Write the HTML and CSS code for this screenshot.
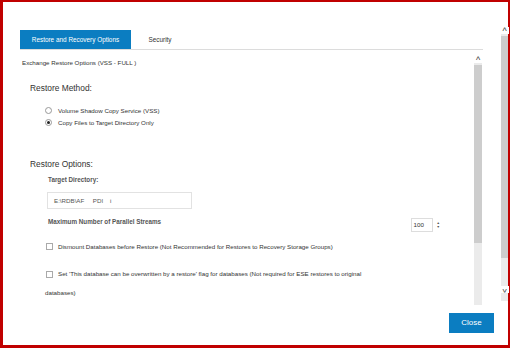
FILE: index.html
```html
<!doctype html>
<html lang="en">
<head>
<meta charset="UTF-8">
<title>Restore and Recovery Options</title>
<link rel="stylesheet" href="styles.css">
</head>
<body>
	<div class="frame">
		<div class="dialog">
			<div class="tabs">
				<div class="tab active">Restore and Recovery Options</div>
				<div class="tab second">Security</div>
			</div>
			<div class="panel">
				<div class="content">
					<div class="title">Exchange Restore Options (VSS - FULL )</div>

					<div class="section">Restore Method:</div>
					<div class="radios">
						<div class="radio"><span class="dot"></span>Volume Shadow Copy Service (VSS)</div>
						<div class="radio"><span class="dot on"></span>Copy Files to Target Directory Only</div>
					</div>

					<div class="section options">Restore Options:</div>
					<div class="field">
						<div class="label">Target Directory:</div>
						<div class="input">E:\RDB\AF&nbsp;&nbsp;&nbsp;&nbsp;&nbsp;PDI&nbsp;&nbsp;&nbsp;&nbsp;i</div>
						<div class="streams">
							<span class="label">Maximum Number of Parallel Streams</span>
							<span class="spin">
								<span class="spinbox">100</span>
								<span class="arrows"><i>&#9650;</i><i>&#9660;</i></span>
							</span>
						</div>
					</div>
					<div class="check"><span class="box"></span>Dismount Databases before Restore (Not Recommended for Restores to Recovery Storage Groups)</div>
					<div class="check wrap"><span class="box"></span>Set 'This database can be overwritten by a restore' flag for databases (Not required for ESE restores to original databases)</div>
				</div>
				<div class="scroll inner">
					<span class="arrow">&#94;</span>
					<span class="thumb"></span>
				</div>
			</div>
			<div class="footer">
				<a href="#" class="btn">Close</a>
			</div>
		</div>
		<div class="scroll outer">
			<span class="arrow">&#94;</span>
			<span class="thumb"></span>
			<span class="arrow down">&#94;</span>
		</div>
	</div>
</body>
</html>
```

FILE: styles.css
```css
* {margin:0;padding:0;box-sizing:border-box;}
body{font-family:"Liberation Sans",Arial,sans-serif;color:#333;background:#fff;}
a{text-decoration:none;}
.frame{width:510px;height:348px;border:solid #c00000;border-width:2px 2px 3px 3px;display:flex;background:#fff;}
.dialog{flex:1;padding:28px 7px 0 17px;display:flex;flex-direction:column;}
.tabs{display:flex;height:20px;border-bottom:1px solid #dcdcdc;margin-right:11px;font-size:6.4px;}
.tab{width:111px;line-height:19px;text-align:center;color:#333;}
.tab.second{width:58px;}
.tab.active{background:#0b7dc1;color:#fff;}
.panel{height:255px;display:flex;margin-right:11px;}
.content{flex:1;overflow:hidden;font-size:6.2px;}
.title{padding:8px 0 0 2px;line-height:9px;}
.section{font-size:8.4px;padding:16px 0 0 10px;line-height:11px;}
.section.options{padding-top:31px;}
.radios{padding:10px 0 0 25px;}
.radio{display:flex;align-items:center;height:12px;}
.dot{width:7px;height:7px;border:1px solid #999;border-radius:50%;margin-right:6px;position:relative;background:#fff;}
.dot.on::after{content:"";position:absolute;left:1px;top:1px;width:3px;height:3px;border-radius:50%;background:#222;}
.field{padding:5px 0 0 28px;}
.label{font-weight:bold;font-size:6.3px;color:#555;display:block;line-height:9px;}
.input{width:145px;height:17px;margin:8px 0 0 -1px;border:1px solid #e2e2e2;line-height:15px;padding-left:6px;color:#555;}
.streams{display:flex;align-items:flex-start;margin-top:6px;}
.streams .label{flex:1;padding-top:2px;}
.spin{display:flex;align-items:center;margin-right:34px;margin-top:3px;}
.spinbox{width:22px;height:14px;border:1px solid #ddd;line-height:12px;padding-left:2px;color:#333;font-size:6.2px;}
.arrows{display:flex;flex-direction:column;margin-left:4px;font-size:3.5px;line-height:4px;color:#555;}
.arrows i{font-style:normal;}
.check{display:flex;align-items:center;padding-left:26px;margin-top:10px;line-height:9px;}
.check.wrap{display:block;padding:0 88px 0 25px;margin-top:13px;line-height:19px;}
.box{width:7px;height:7px;border:1px solid #aaa;margin-right:5px;display:inline-block;vertical-align:middle;}
.check.wrap .box{margin-left:1px;}
.scroll{display:flex;flex-direction:column;align-items:center;}
.scroll .arrow{font-size:9px;line-height:9px;height:7px;color:#333;}
.scroll.inner{width:8px;margin:6px 1px 0 0;background:#ebebeb;}
.scroll.inner .thumb{width:8px;height:178px;background:#cdcdcd;margin-top:2px;}
.scroll.inner .arrow{background:#fff;width:10px;text-align:center;}
.scroll.outer{width:7px;margin:25px 0 44px 0;background:#ebebeb;}
.scroll.outer .thumb{width:7px;height:222px;background:#cdcdcd;margin-top:2px;}
.scroll.outer .arrow{background:#fff;width:9px;text-align:center;}
.scroll.outer .down{transform:rotate(180deg);margin-top:auto;margin-bottom:8px;}
.footer{display:flex;justify-content:flex-end;padding-top:8px;}
.btn{width:45px;height:20px;background:#0b7dc1;color:#fff;font-size:8px;line-height:20px;text-align:center;}
```
